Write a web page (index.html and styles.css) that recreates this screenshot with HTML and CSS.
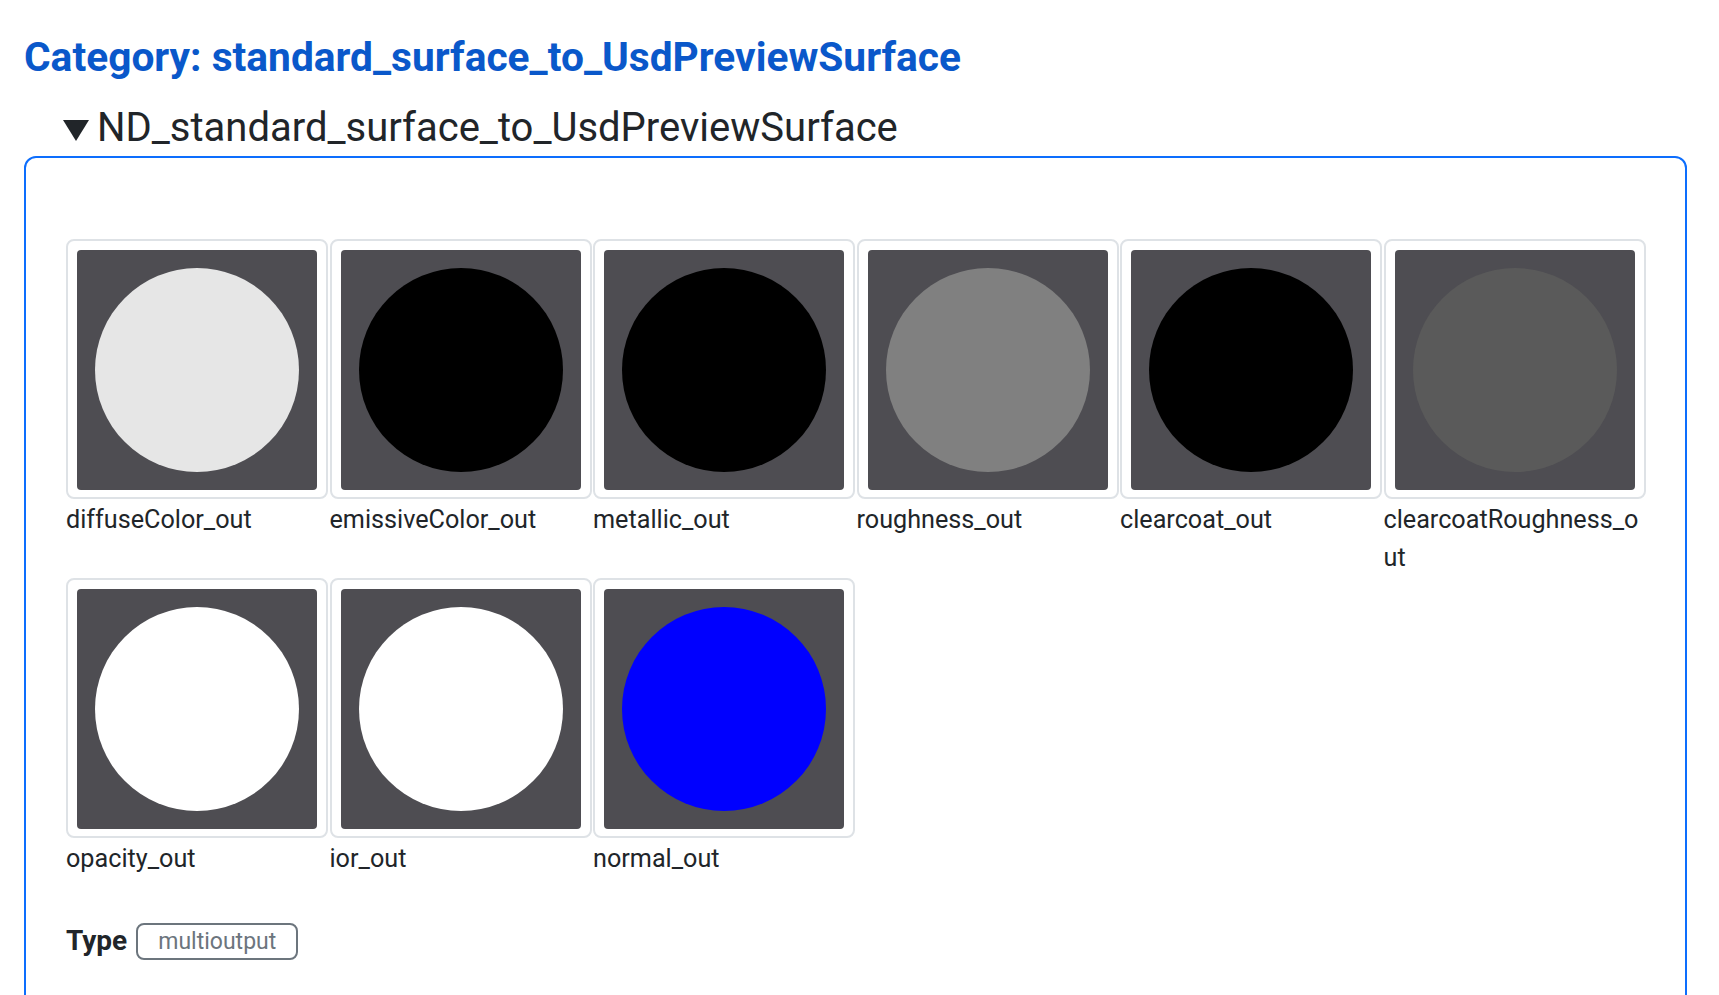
FILE: index.html
```html
<!DOCTYPE html>
<html lang="en">
<head>
<meta charset="utf-8">
<title>standard_surface_to_UsdPreviewSurface</title>
<link rel="stylesheet" href="styles.css">
</head>
<body>
<main class="page">
  <h1 class="category">Category: standard_surface_to_UsdPreviewSurface</h1>
  <details class="node" open>
    <summary class="node-name">ND_standard_surface_to_UsdPreviewSurface</summary>
    <div class="node-box">
      <div class="outputs">
        <div class="output">
          <div class="swatch-card"><svg class="swatch" viewBox="0 0 240 240"><rect width="240" height="240" rx="4" fill="#4e4d52"/><circle cx="120" cy="120" r="102" fill="#e6e6e6"/></svg></div>
          <div class="output-name">diffuseColor_out</div>
        </div>
        <div class="output">
          <div class="swatch-card"><svg class="swatch" viewBox="0 0 240 240"><rect width="240" height="240" rx="4" fill="#4e4d52"/><circle cx="120" cy="120" r="102" fill="#000000"/></svg></div>
          <div class="output-name">emissiveColor_out</div>
        </div>
        <div class="output">
          <div class="swatch-card"><svg class="swatch" viewBox="0 0 240 240"><rect width="240" height="240" rx="4" fill="#4e4d52"/><circle cx="120" cy="120" r="102" fill="#000000"/></svg></div>
          <div class="output-name">metallic_out</div>
        </div>
        <div class="output">
          <div class="swatch-card"><svg class="swatch" viewBox="0 0 240 240"><rect width="240" height="240" rx="4" fill="#4e4d52"/><circle cx="120" cy="120" r="102" fill="#808080"/></svg></div>
          <div class="output-name">roughness_out</div>
        </div>
        <div class="output">
          <div class="swatch-card"><svg class="swatch" viewBox="0 0 240 240"><rect width="240" height="240" rx="4" fill="#4e4d52"/><circle cx="120" cy="120" r="102" fill="#000000"/></svg></div>
          <div class="output-name">clearcoat_out</div>
        </div>
        <div class="output">
          <div class="swatch-card"><svg class="swatch" viewBox="0 0 240 240"><rect width="240" height="240" rx="4" fill="#4e4d52"/><circle cx="120" cy="120" r="102" fill="#5a5a5a"/></svg></div>
          <div class="output-name">clearcoatRoughness_out</div>
        </div>
        <div class="output">
          <div class="swatch-card"><svg class="swatch" viewBox="0 0 240 240"><rect width="240" height="240" rx="4" fill="#4e4d52"/><circle cx="120" cy="120" r="102" fill="#ffffff"/></svg></div>
          <div class="output-name">opacity_out</div>
        </div>
        <div class="output">
          <div class="swatch-card"><svg class="swatch" viewBox="0 0 240 240"><rect width="240" height="240" rx="4" fill="#4e4d52"/><circle cx="120" cy="120" r="102" fill="#ffffff"/></svg></div>
          <div class="output-name">ior_out</div>
        </div>
        <div class="output">
          <div class="swatch-card"><svg class="swatch" viewBox="0 0 240 240"><rect width="240" height="240" rx="4" fill="#4e4d52"/><circle cx="120" cy="120" r="102" fill="#0000ff"/></svg></div>
          <div class="output-name">normal_out</div>
        </div>
      </div>
      <div class="type-row">
        <span class="type-label">Type</span>
        <span class="badge">multioutput</span>
      </div>
    </div>
  </details>
</main>
</body>
</html>
```

FILE: styles.css
```css
html, body {
  margin: 0;
  padding: 0;
  background: #ffffff;
}

body {
  font-family: Roboto, "Liberation Sans", Arial, sans-serif;
  color: #212529;
}

.page {
  padding: 0 32px 0 24px;
}

.category {
  margin: 33px 0 0 0;
  font-size: 40.7px;
  line-height: 48px;
  font-weight: 700;
  color: #0a58ca;
}

.node {
  margin-top: 23px;
}

.node-name {
  display: block;
  list-style: none;
  padding-left: 39px;
  font-size: 40px;
  line-height: 48px;
  font-weight: 400;
  color: #212529;
  cursor: pointer;
}

.node-name::-webkit-details-marker {
  display: none;
}

.node-name::before {
  content: "";
  display: inline-block;
  width: 0;
  height: 0;
  border-left: 13px solid transparent;
  border-right: 13px solid transparent;
  border-top: 21px solid #212529;
  margin-right: 8px;
}

.node-box {
  margin-top: 4px;
  border: 2px solid #0d6efd;
  border-radius: 12px;
  padding: 81px 30px 60px 40px;
}

.outputs {
  display: flex;
  flex-wrap: wrap;
  column-gap: 1.5px;
  row-gap: 0;
}

.output {
  width: 262px;
}

.swatch-card {
  border: 2px solid #dee2e6;
  border-radius: 8px;
  padding: 9px 9px 7px 9px;
  background: #ffffff;
}

.swatch {
  display: block;
  width: 240px;
  height: 240px;
}

.output-name {
  padding-top: 2px;
  font-size: 25.2px;
  line-height: 38.4px;
  word-break: break-all;
  color: #212529;
}

.type-row {
  display: flex;
  align-items: center;
  gap: 9px;
  margin-top: 44px;
}

.type-label {
  font-size: 28px;
  font-weight: 700;
  line-height: 38.4px;
}

.badge {
  display: inline-block;
  border: 2px solid #6c757d;
  border-radius: 8px;
  padding: 0 20px;
  font-size: 23px;
  line-height: 33px;
  color: #6c757d;
}
```
